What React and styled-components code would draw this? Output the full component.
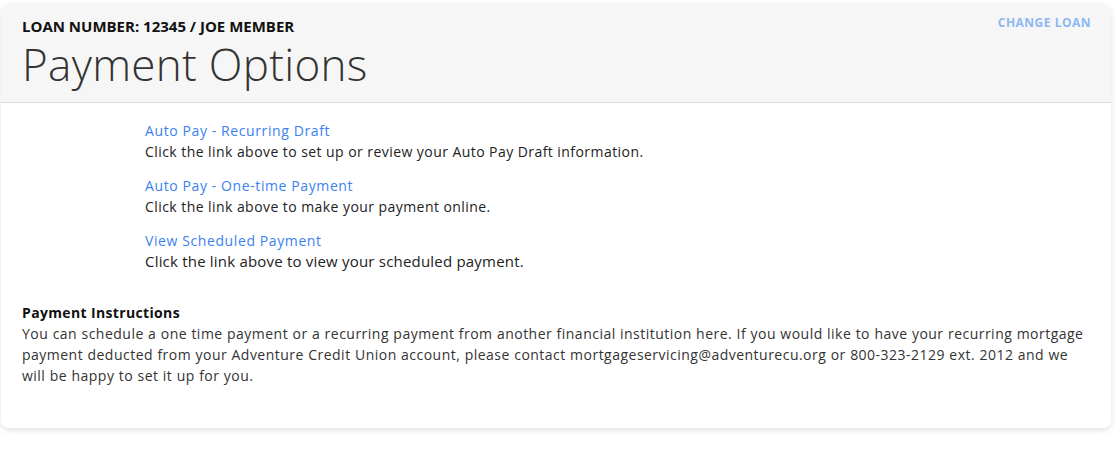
import React from "react";
import styled, { createGlobalStyle } from "styled-components";

const GlobalStyle = createGlobalStyle`
  body {
    margin: 0;
    background: #ffffff;
    font-family: "Open Sans", "Liberation Sans", sans-serif;
    color: #222;
  }
`;

const Page = styled.div`
  padding: 4px 6px 27px 1px;
`;

const Card = styled.div`
  background: #fff;
  border-radius: 8px;
  box-shadow: 0 2px 6px rgba(0, 0, 0, 0.12);
  overflow: hidden;
`;

const Header = styled.header`
  background: #f6f6f6;
  border-bottom: 1px solid #dcdcdc;
  padding: 14px 21px 8px 21px;
  display: flex;
  justify-content: space-between;
  align-items: flex-start;
`;

const TitleBlock = styled.div`
  display: flex;
  flex-direction: column;
`;

const LoanLine = styled.div`
  font-weight: 700;
  font-size: 15px;
  line-height: 16px;
  color: #111;
`;

const Title = styled.h1`
  margin: 0;
  font-weight: 300;
  font-size: 44px;
  line-height: 60px;
  color: #333;
  letter-spacing: 0.3px;
`;

const ChangeLink = styled.a`
  font-weight: 700;
  font-size: 12px;
  line-height: 16px;
  letter-spacing: 0.5px;
  color: #8db7f4;
  text-decoration: none;
  margin-top: -3px;
  margin-right: -1px;
`;

const Body = styled.div`
  padding: 17px 21px 42px 21px;
`;

const OptionList = styled.div`
  display: flex;
  flex-direction: column;
  gap: 13px;
  padding-left: 123px;
`;

const Option = styled.div`
  display: flex;
  flex-direction: column;
`;

const OptionLink = styled.a`
  font-size: 14px;
  line-height: 21px;
  color: #3b82f0;
  text-decoration: none;
  letter-spacing: 0.6px;
`;

const OptionText = styled.div`
  font-size: ${(p) => (p.$alt ? "15px" : "14px")};
  line-height: 21px;
  color: #222;
  letter-spacing: ${(p) => (p.$alt ? "0.2px" : "0.44px")};
`;

const Instructions = styled.section`
  margin-top: 30px;
`;

const InstrTitle = styled.div`
  font-weight: 700;
  font-size: 14px;
  line-height: 21px;
  color: #111;
  letter-spacing: 0.35px;
`;

const InstrText = styled.p`
  margin: 0;
  font-size: 14px;
  line-height: 21px;
  color: #333;
  letter-spacing: 0.48px;
  word-spacing: 0.25px;
`;

const options = [
  {
    link: "Auto Pay - Recurring Draft",
    text: "Click the link above to set up or review your Auto Pay Draft information.",
  },
  {
    link: "Auto Pay - One-time Payment",
    text: "Click the link above to make your payment online.",
  },
  {
    link: "View Scheduled Payment",
    text: "Click the link above to view your scheduled payment.",
    alt: true,
  },
];

export default function App() {
  return (
    <>
      <GlobalStyle />
      <Page>
        <Card>
          <Header>
            <TitleBlock>
              <LoanLine>LOAN NUMBER: 12345 / JOE MEMBER</LoanLine>
              <Title>Payment Options</Title>
            </TitleBlock>
            <ChangeLink href="#">CHANGE LOAN</ChangeLink>
          </Header>
          <Body>
            <OptionList>
              {options.map((o) => (
                <Option key={o.link}>
                  <OptionLink href="#">{o.link}</OptionLink>
                  <OptionText $alt={o.alt}>{o.text}</OptionText>
                </Option>
              ))}
            </OptionList>
            <Instructions>
              <InstrTitle>Payment Instructions</InstrTitle>
              <InstrText>
                You can schedule a one time payment or a recurring payment from another financial
                institution here. If you would like to have your recurring mortgage payment deducted
                from your Adventure Credit Union account, please contact
                mortgageservicing@adventurecu.org or 800-323-2129 ext. 2012 and we
                <br />
                will be happy to set it up for you.
              </InstrText>
            </Instructions>
          </Body>
        </Card>
      </Page>
    </>
  );
}
